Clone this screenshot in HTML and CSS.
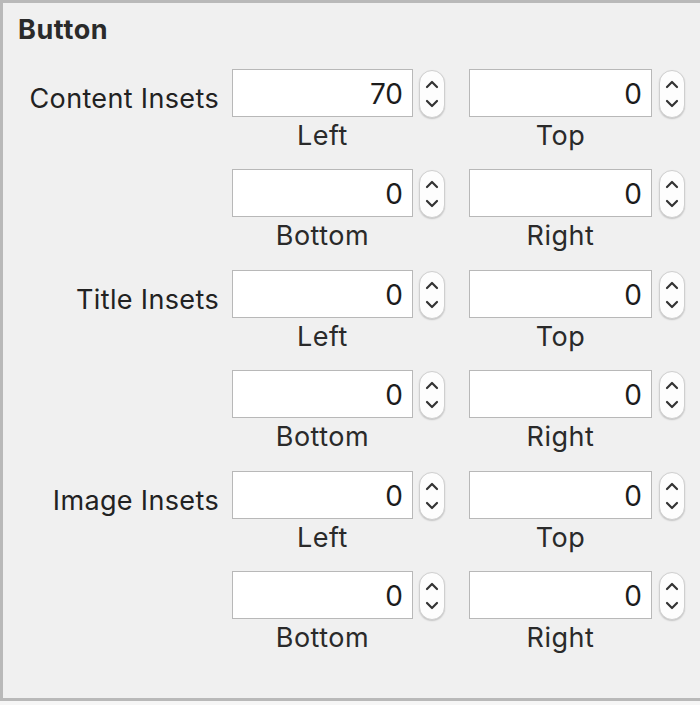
FILE: index.html
```html
<!DOCTYPE html>
<html>
<head>
<meta charset="utf-8">
<link rel="stylesheet" href="styles.css">
</head>
<body>
<div class="panel">
  <div class="heading">Button</div>
  <div class="grid">
    <!-- Content Insets -->
    <div class="rlabel">Content Insets</div>
    <div class="group"><div class="field">70</div><div class="stepper"><svg width="26" height="48" viewBox="0 0 26 48"><path d="M8 17 L13 12 L18 17 M8 31 L13 36 L18 31" /></svg></div></div>
    <div class="group g2"><div class="field">0</div><div class="stepper"><svg width="26" height="48" viewBox="0 0 26 48"><path d="M8 17 L13 12 L18 17 M8 31 L13 36 L18 31" /></svg></div></div>
    <div></div><div class="cap c1">Left</div><div class="cap c2">Top</div>

    <div></div>
    <div class="group"><div class="field">0</div><div class="stepper"><svg width="26" height="48" viewBox="0 0 26 48"><path d="M8 17 L13 12 L18 17 M8 31 L13 36 L18 31" /></svg></div></div>
    <div class="group g2"><div class="field">0</div><div class="stepper"><svg width="26" height="48" viewBox="0 0 26 48"><path d="M8 17 L13 12 L18 17 M8 31 L13 36 L18 31" /></svg></div></div>
    <div></div><div class="cap c1">Bottom</div><div class="cap c2">Right</div>

    <!-- Title Insets -->
    <div class="rlabel">Title Insets</div>
    <div class="group"><div class="field">0</div><div class="stepper"><svg width="26" height="48" viewBox="0 0 26 48"><path d="M8 17 L13 12 L18 17 M8 31 L13 36 L18 31" /></svg></div></div>
    <div class="group g2"><div class="field">0</div><div class="stepper"><svg width="26" height="48" viewBox="0 0 26 48"><path d="M8 17 L13 12 L18 17 M8 31 L13 36 L18 31" /></svg></div></div>
    <div></div><div class="cap c1">Left</div><div class="cap c2">Top</div>

    <div></div>
    <div class="group"><div class="field">0</div><div class="stepper"><svg width="26" height="48" viewBox="0 0 26 48"><path d="M8 17 L13 12 L18 17 M8 31 L13 36 L18 31" /></svg></div></div>
    <div class="group g2"><div class="field">0</div><div class="stepper"><svg width="26" height="48" viewBox="0 0 26 48"><path d="M8 17 L13 12 L18 17 M8 31 L13 36 L18 31" /></svg></div></div>
    <div></div><div class="cap c1">Bottom</div><div class="cap c2">Right</div>

    <!-- Image Insets -->
    <div class="rlabel">Image Insets</div>
    <div class="group"><div class="field">0</div><div class="stepper"><svg width="26" height="48" viewBox="0 0 26 48"><path d="M8 17 L13 12 L18 17 M8 31 L13 36 L18 31" /></svg></div></div>
    <div class="group g2"><div class="field">0</div><div class="stepper"><svg width="26" height="48" viewBox="0 0 26 48"><path d="M8 17 L13 12 L18 17 M8 31 L13 36 L18 31" /></svg></div></div>
    <div></div><div class="cap c1">Left</div><div class="cap c2">Top</div>

    <div></div>
    <div class="group"><div class="field">0</div><div class="stepper"><svg width="26" height="48" viewBox="0 0 26 48"><path d="M8 17 L13 12 L18 17 M8 31 L13 36 L18 31" /></svg></div></div>
    <div class="group g2"><div class="field">0</div><div class="stepper"><svg width="26" height="48" viewBox="0 0 26 48"><path d="M8 17 L13 12 L18 17 M8 31 L13 36 L18 31" /></svg></div></div>
    <div></div><div class="cap c1">Bottom</div><div class="cap c2">Right</div>
  </div>
</div>
</body>
</html>
```

FILE: styles.css
```css
html, body {
  margin: 0;
  padding: 0;
  background: #f6f6f6;
}
body {
  font-family: Inter, "Open Sans", "Liberation Sans", sans-serif;
  color: #222;
}
.panel {
  box-sizing: border-box;
  height: 701px;
  background: #f0f0f0;
  border-top: 3px solid #b9b9b9;
  border-left: 3px solid #b9b9b9;
  border-bottom: 3px solid #b9b9b9;
  padding-top: 12px;
}
.heading {
  font-weight: 700;
  font-size: 27px;
  line-height: 30px;
  letter-spacing: 0.6px;
  padding-left: 15px;
  color: #2a2a2a;
}
.grid {
  margin-top: 24px;
  display: grid;
  grid-template-columns: 229px 237px 216px;
  grid-template-rows: repeat(6, 48px 52.4px);
}
.rlabel {
  text-align: right;
  padding-right: 13px;
  font-size: 27px;
  letter-spacing: 0.35px;
  line-height: 48px;
  padding-top: 6px;
  box-sizing: border-box;
  height: 48px;
  white-space: nowrap;
}
.group {
  display: flex;
  align-items: flex-start;
  gap: 6px;
}
.field {
  box-sizing: border-box;
  width: 181px;
  height: 48px;
  background: #fff;
  border: 1.5px solid #b8b8b8;
  text-align: right;
  padding-right: 9px;
  font-size: 28px;
  line-height: 48px;
  color: #1c1c1c;
}
.g2 { gap: 7px; }
.g2 .field { width: 183px; }
.stepper {
  box-sizing: border-box;
  width: 26px;
  height: 48px;
  margin-top: 1px;
  border-radius: 13px;
  background: #fdfdfd;
  border: 1px solid #cfcfcf;
  box-shadow: 0 1px 1.5px rgba(0,0,0,0.18);
  position: relative;
}
.stepper svg {
  position: absolute;
  left: -1px;
  top: -1px;
  fill: none;
  stroke: #333;
  stroke-width: 2.2;
  stroke-linecap: round;
  stroke-linejoin: round;
}
.cap {
  font-size: 27px;
  letter-spacing: 0.5px;
  line-height: 30px;
  margin-top: 4px;
  text-align: center;
  color: #2a2a2a;
}
.c1 { width: 181px; }
.c2 { width: 183px; }
```
